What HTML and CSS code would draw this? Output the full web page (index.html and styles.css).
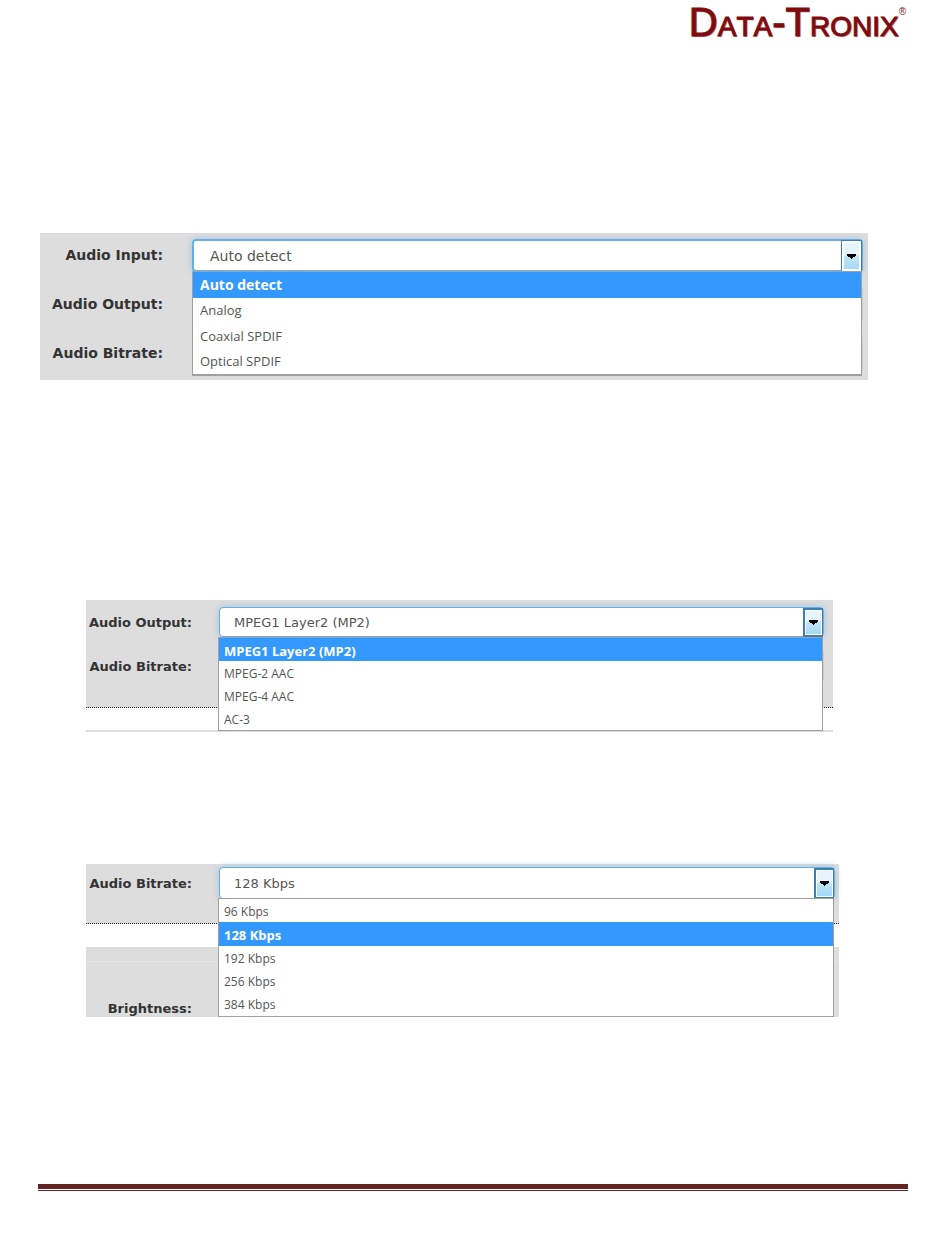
FILE: index.html
```html
<!DOCTYPE html>
<html lang="en">
<head>
<meta charset="utf-8">
<title>Data-Tronix audio settings</title>
<link rel="stylesheet" href="styles.css">
</head>
<body>
<header class="header">
  <div class="logo"><span class="cap">D</span>ATA<span class="cap">-T</span>RONIX<sup class="mark">®</sup></div>
</header>
<main class="main">
  <section class="panel panel-input">
    <div class="row">
      <label class="label" for="input">Audio Input:</label>
      <div class="control">
        <select class="select" id="input"><option>Auto detect</option><option>Analog</option><option>Coaxial SPDIF</option><option>Optical SPDIF</option></select>
        <span class="arrow" aria-hidden="true"><svg width="9" height="5" viewBox="0 0 9 5"><path d="M0 0h9v2h-1v1h-2v1h-1v1h-1v-1h-1v-1h-2v-1h-1z"/></svg></span>
        <ul class="menu" role="listbox" aria-label="Audio Input">
          <li class="item selected" role="option" aria-selected="true">Auto detect</li>
          <li class="item" role="option">Analog</li>
          <li class="item" role="option">Coaxial SPDIF</li>
          <li class="item" role="option">Optical SPDIF</li>
        </ul>
      </div>
    </div>
    <div class="row"><span class="label">Audio Output:</span><span class="covered"></span></div>
    <div class="row"><span class="label">Audio Bitrate:</span><span class="covered"></span></div>
  </section>

  <section class="panel panel-output">
    <div class="block">
      <div class="row">
        <label class="label" for="output">Audio Output:</label>
        <div class="control">
          <select class="select" id="output"><option>MPEG1 Layer2 (MP2)</option><option>MPEG-2 AAC</option><option>MPEG-4 AAC</option><option>AC-3</option></select>
          <span class="arrow" aria-hidden="true"><svg width="9" height="5" viewBox="0 0 9 5"><path d="M0 0h9v2h-1v1h-2v1h-1v1h-1v-1h-1v-1h-2v-1h-1z"/></svg></span>
          <ul class="menu" role="listbox" aria-label="Audio Output">
            <li class="item selected" role="option" aria-selected="true">MPEG1 Layer2 (MP2)</li>
            <li class="item" role="option">MPEG-2 AAC</li>
            <li class="item" role="option">MPEG-4 AAC</li>
            <li class="item" role="option">AC-3</li>
          </ul>
        </div>
      </div>
      <div class="row"><span class="label">Audio Bitrate:</span><span class="covered"></span></div>
    </div>
  </section>

  <section class="panel panel-bitrate">
    <div class="block">
      <div class="row">
        <label class="label" for="bitrate">Audio Bitrate:</label>
        <div class="control">
          <select class="select" id="bitrate"><option>96 Kbps</option><option selected>128 Kbps</option><option>192 Kbps</option><option>256 Kbps</option><option>384 Kbps</option></select>
          <span class="arrow" aria-hidden="true"><svg width="9" height="5" viewBox="0 0 9 5"><path d="M0 0h9v2h-1v1h-2v1h-1v1h-1v-1h-1v-1h-2v-1h-1z"/></svg></span>
          <ul class="menu" role="listbox" aria-label="Audio Bitrate">
            <li class="item" role="option">96 Kbps</li>
            <li class="item selected" role="option" aria-selected="true">128 Kbps</li>
            <li class="item" role="option">192 Kbps</li>
            <li class="item" role="option">256 Kbps</li>
            <li class="item" role="option">384 Kbps</li>
          </ul>
        </div>
      </div>
    </div>
    <div class="next">
      <div class="next-head"></div>
      <div class="row"><span class="label">Brightness:</span></div>
    </div>
  </section>
</main>
<footer class="footer"></footer>
</body>
</html>
```
FILE: styles.css
```css
* { box-sizing: border-box; }

body {
  margin: 0;
  background: #fff;
  color: #333;
  font-family: "DejaVu Sans", Verdana, sans-serif;
}

/* Header logo */
.header {
  display: flex;
  justify-content: flex-end;
  padding: 0 44px 0 38px;
}

.logo {
  display: flex;
  align-items: baseline;
  height: 50px;
  font: 28px/44px "Liberation Sans", Arial, sans-serif;
  font-kerning: none;
  color: #800a10;
  -webkit-text-stroke: 1px #800a10;
  text-shadow: 1px 1px 1px #9a8080;
}

.cap { font-size: 40px; }

.mark {
  align-self: flex-start;
  font-size: 10px;
  line-height: 24px;
  -webkit-text-stroke: 0;
  text-shadow: none;
}

/* Settings panels */
.main { padding: 183px 82px 0 40px; }

.panel-input {
  display: grid;
  gap: 16px;
  padding: 6px 5px 10px 0;
  background: #ddd;
}

.panel-output {
  margin: 220px 35px 0 46px;
  padding-bottom: 22px;
  border-bottom: 2px solid #ddd;
}

.panel-output .block {
  display: grid;
  gap: 14px;
  padding: 7px 9px 26px 0;
}

.panel-bitrate { margin: 132px 29px 0 46px; }

.panel-bitrate .block { padding: 3px 4px 24px 0; }

.block {
  background: #ddd;
  border-bottom: 1px dotted #222;
}

.next {
  margin-top: 23px;
  background: #ddd;
}

.next-head {
  height: 15px;
  margin-bottom: 37px;
  border-bottom: 1px solid #e6e6e6;
}

.row {
  display: grid;
  grid-template-columns: 106px 1fr;
  column-gap: 27px;
  align-items: center;
}

.panel-input .row {
  grid-template-columns: 123px 1fr;
  column-gap: 29px;
}

.label {
  padding-top: 2px;
  font-size: 13px;
  line-height: 16px;
  font-weight: bold;
  text-align: right;
}

.panel-input .label {
  padding: 0 0 2px;
  font-size: 14px;
}

.covered {
  height: 30px;
  border-right: 2px solid #ccc;
}

.panel-input .covered { height: 33px; }

/* Open drop-down */
.control { position: relative; }

.select {
  display: block;
  width: 100%;
  height: 30px;
  padding: 0 32px 0 14px;
  appearance: none;
  background: #fff;
  border: 1px solid #66afe9;
  border-radius: 4px;
  box-shadow: 0 0 7px #a5c4df;
  color: #555;
  font: 13px "DejaVu Sans", Verdana, sans-serif;
}

.panel-input .select {
  height: 33px;
  padding-left: 16px;
  border-width: 2px;
  font-size: 14px;
}

.panel-bitrate .select { height: 32px; }

.arrow {
  position: absolute;
  top: 1px;
  right: 1px;
  bottom: 0;
  display: grid;
  place-items: center;
  width: 20px;
  border: 2px solid #3c7fb1;
  border-right-width: 1px;
  box-shadow: inset 0 0 0 1px #fff;
  background: linear-gradient(#e6f5fd 0 45%, #c0e4f8 50%, #a3d8f5);
  pointer-events: none;
}

.panel-input .arrow {
  width: 21px;
  border-width: 1px;
  box-shadow: inset 0 0 0 2px #fff;
}

.menu {
  position: absolute;
  top: 100%;
  left: -1px;
  right: 1px;
  z-index: 1;
  display: flex;
  flex-direction: column;
  height: 94px;
  margin: 0;
  padding: 0;
  border: 1px solid #a0a0a0;
  background: #fff;
  list-style: none;
}

.panel-input .menu {
  left: 0;
  height: 105px;
  margin-top: -1px;
  border-bottom-width: 2px;
}

.panel-bitrate .menu {
  height: 119px;
  margin-top: -1px;
}

.item {
  display: flex;
  flex: 1;
  align-items: center;
  padding: 2px 5px 0;
  color: #555;
  font: 12px/16px "Open Sans", Tahoma, sans-serif;
}

.panel-input .item {
  padding: 0 7px;
  font-size: 13px;
}

.item.selected {
  background: #3399ff;
  color: #fff;
  font-size: 13px;
  font-weight: bold;
}

.panel-input .item.selected { font-size: 14px; }

/* Double rule closing the page */
.footer {
  height: 7px;
  margin: 167px 42px 57px 38px;
  border-top: 5px solid #622423;
  border-bottom: 1px solid #622423;
}
```
